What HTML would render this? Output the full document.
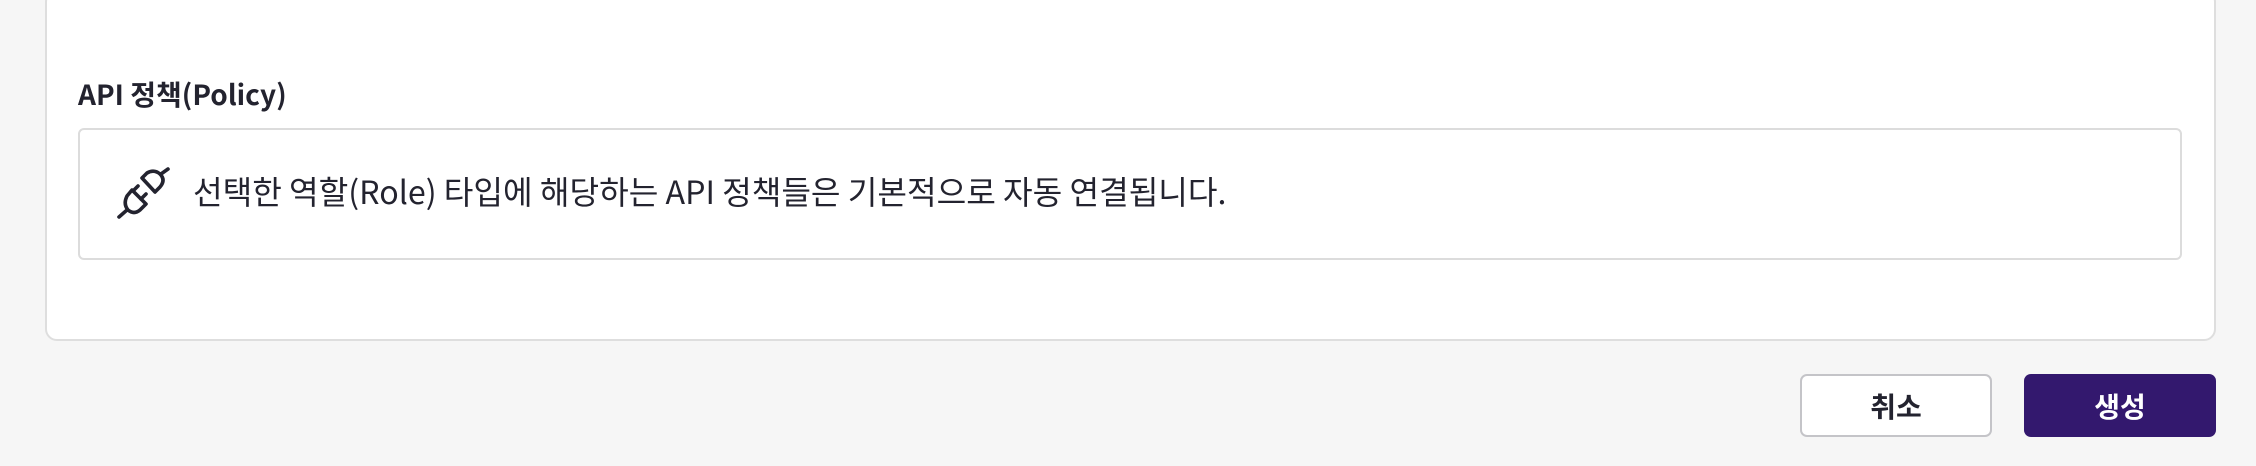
<!DOCTYPE html>
<html><head><meta charset="utf-8"><style>
body{margin:0;width:2256px;height:466px;background:#f6f6f6;position:relative;overflow:hidden;font-family:"Liberation Sans","Noto Sans CJK KR",sans-serif;color:#23232f}
.card{position:absolute;left:45px;top:-10px;width:2171px;height:351px;background:#fff;border:2px solid #dedede;border-radius:12px;box-sizing:border-box}
.h{position:absolute;left:78px;top:74px;font-size:28px;font-weight:bold;line-height:40px;font-family:"Noto Sans CJK KR",sans-serif}
.box{position:absolute;left:78px;top:128px;width:2104px;height:132px;border:2px solid #dcdcdc;border-radius:6px;box-sizing:border-box;background:#fff}
.t{position:absolute;left:193px;top:169px;font-size:32.2px;line-height:44px;font-family:"Noto Sans CJK KR",sans-serif;white-space:nowrap}
.btn{position:absolute;top:374px;height:63px;border-radius:7px;box-sizing:border-box;font-size:28px;font-weight:bold;display:flex;align-items:center;justify-content:center;font-family:"Noto Sans CJK KR",sans-serif}
</style></head><body>
<div class="card"></div>
<div class="h">API 정책(Policy)</div>
<div class="box"></div>
<svg style="position:absolute;left:110px;top:160px" width="70" height="66" viewBox="0 0 70 66" fill="none" stroke="#23232f" stroke-width="3.6" stroke-linecap="round" stroke-linejoin="round">
<path d="M32 18 L45 32 L50 27 Q56 20 50 14 Q44 9 37 13 Z"/><path d="M51 14 L58 9"/>
<path d="M22 30 L36 44 L30 50 Q24 55 18 50 Q13 44 17 36 Z"/><path d="M23 31 L28 26 M31 39 L36 34"/><path d="M17 50 L9 57"/>
</svg>
<div class="t">선택한 역할(Role) 타입에 해당하는 API 정책들은 기본적으로 자동 연결됩니다.</div>
<div class="btn" style="left:1800px;width:192px;background:#fff;border:2px solid #c4c4c8;color:#23232f">취소</div>
<div class="btn" style="left:2024px;width:192px;background:#33186e;color:#fff">생성</div>
</body></html>
